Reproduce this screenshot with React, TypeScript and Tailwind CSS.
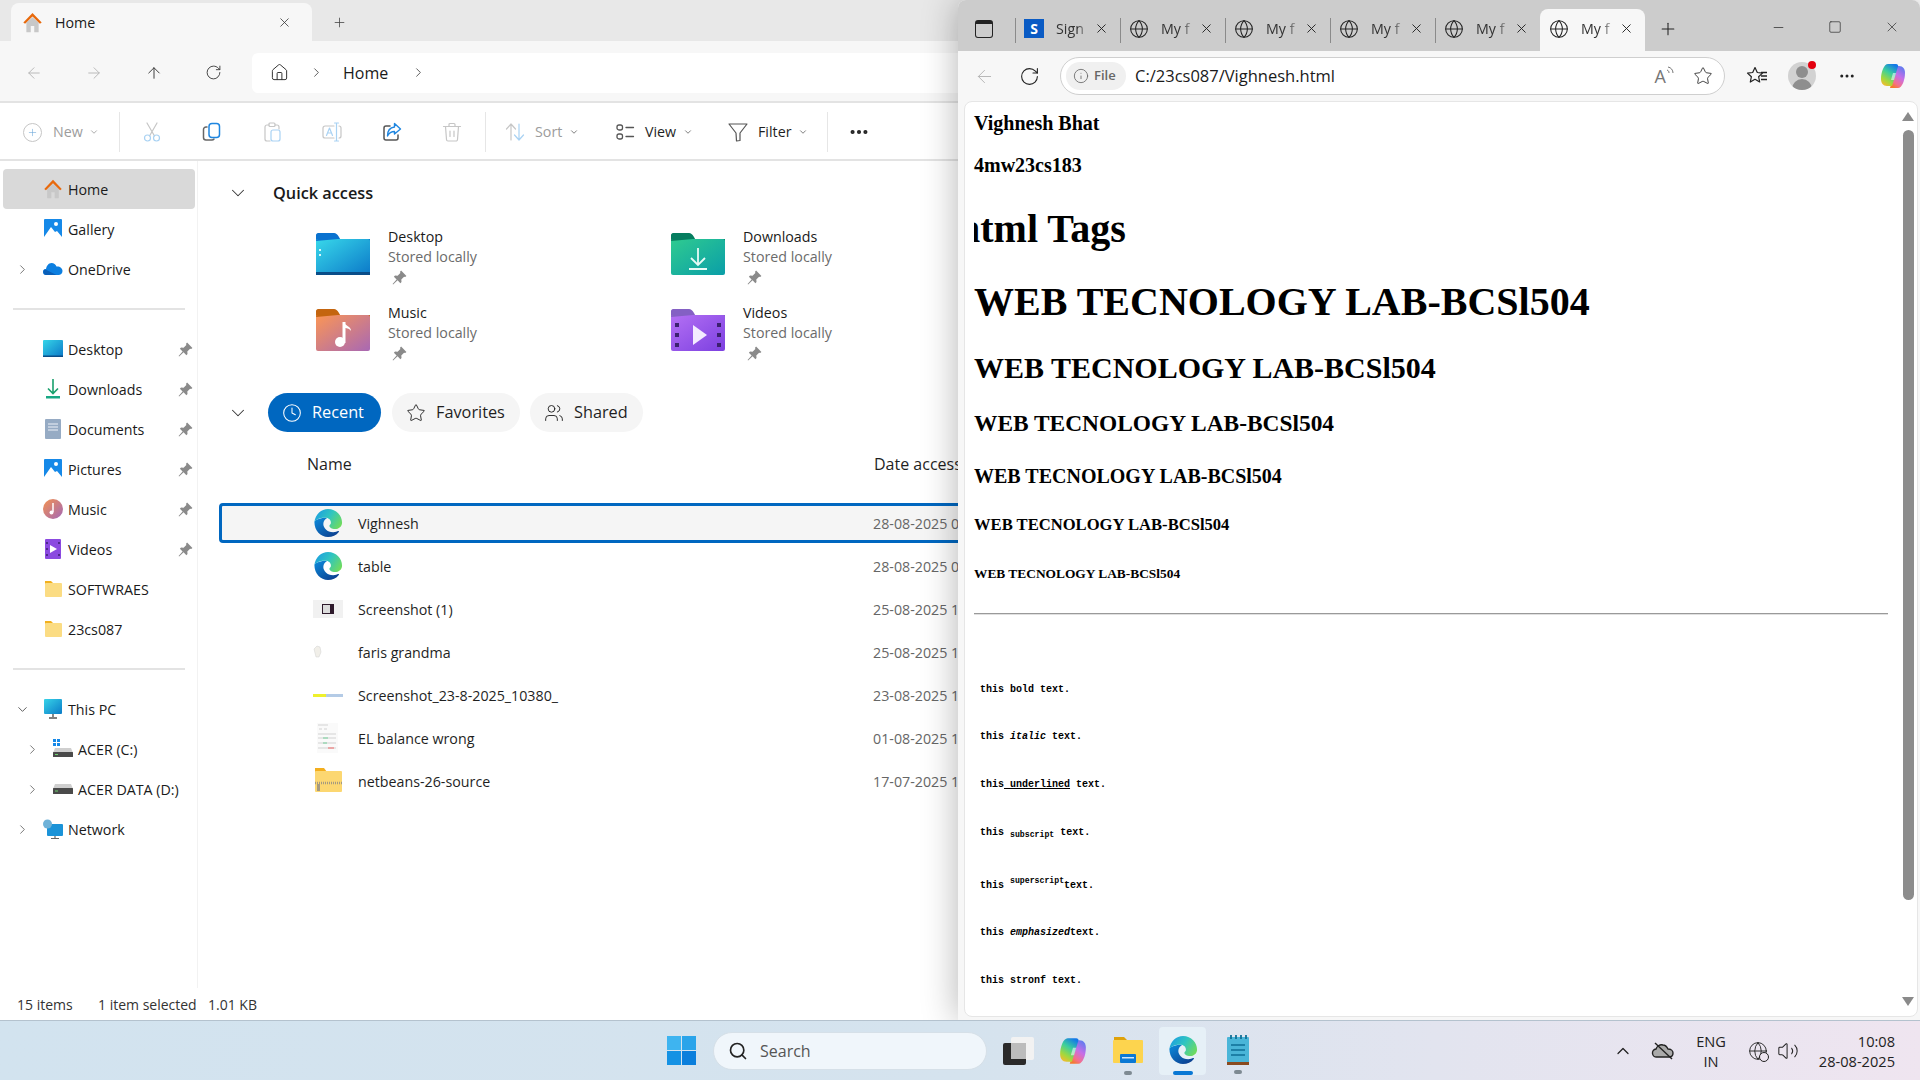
import {
  ArrowLeft,
  ArrowRight,
  ArrowUp,
  ChevronDown,
  ChevronRight,
  ChevronUp,
  Clock,
  Ellipsis,
  Globe,
  Home as HomeIcon,
  Info,
  Minus,
  Plus,
  RotateCw,
  Search,
  Square,
  Star,
  Users,
  Volume2,
  X,
} from "lucide-react";

const UI_FONT = "font-['Open_Sans',sans-serif]";

function PinIcon({ className = "" }: { className?: string }) {
  return (
    <svg viewBox="0 0 16 16" className={`w-[17px] h-[17px] ${className}`}>
      <path d="M9.500 1.500l5 5-1.200 1-1-.3-2.600 2.600.2 2.400-1.100 1.100-2.600-2.600L2 14.500l-.5-.5 3.800-4.200L2.700 7.200l1.100-1.100 2.400.2L8.800 3.700l-.3-1z" fill="#8a8a8a" />
    </svg>
  );
}

function ColorHome({ size = 20 }: { size?: number }) {
  return (
    <svg viewBox="0 0 24 24" width={size} height={size}>
      <path d="M5 12l7-6 7 6v11h-5v-7h-4v7H5z" fill="#c8c8c8" />
      <path d="M12 1L1.500 12l2 1.500L12 5l8.500 8.500 2-1.500z" fill="#e8690c" />
    </svg>
  );
}

function EdgeIcon({ size = 30 }: { size?: number }) {
  return (
    <svg viewBox="0 0 32 32" width={size} height={size}>
      <defs>
        <linearGradient id="edgeTop" x1="0" y1="0.2" x2="1" y2="0.7">
          <stop offset="0" stopColor="#1b9de2" />
          <stop offset="0.5" stopColor="#30c5c0" />
          <stop offset="1" stopColor="#6fdb5e" />
        </linearGradient>
        <linearGradient id="edgeBottom" x1="0.1" y1="0.2" x2="0.8" y2="1">
          <stop offset="0" stopColor="#0c7fd0" />
          <stop offset="1" stopColor="#0c3f8f" />
        </linearGradient>
      </defs>
      <path d="M1.500 15C1.500 24 8 31 16 31c4.500 0 9-2 11.500-5.500.5-.7 0-1.200-.7-.9-1 .5-2.800 1.200-5.300 1.200C15 25.800 11 21 11 17c0-3 2-5.500 4-6.400C8.500 10 2 13 1.500 15z" fill="url(#edgeBottom)" />
      <path d="M1.500 15C2.500 6.500 9 1 16 1c9 0 15 7 15 14.500 0 4.500-3.500 7-7.500 7-3.500 0-6-1.500-6-3.500 0-1 1-1.500 1.500-2.500.5-1.500-.5-5.500-5-6C8 10 3 12.500 1.500 15z" fill="url(#edgeTop)" />
    </svg>
  );
}

function CopilotIcon({ size, idPrefix }: { size: number; idPrefix: string }) {
  return (
    <svg viewBox="0 0 28 28" width={size} height={size}>
      <defs>
        <linearGradient id={`${idPrefix}A`} x1="0.7" y1="0" x2="0.2" y2="1">
          <stop offset="0" stopColor="#1479e8" />
          <stop offset="0.4" stopColor="#3ccf9c" />
          <stop offset="0.75" stopColor="#a4d83c" />
          <stop offset="1" stopColor="#f7b92e" />
        </linearGradient>
        <linearGradient id={`${idPrefix}B`} x1="0.8" y1="0" x2="0.3" y2="1">
          <stop offset="0" stopColor="#5a7cf0" />
          <stop offset="0.45" stopColor="#c66ee8" />
          <stop offset="0.8" stopColor="#f4708c" />
          <stop offset="1" stopColor="#f47a2e" />
        </linearGradient>
      </defs>
      <path d="M19 26h-8L17 4h3c4 0 6 3 6 7 0 7-3 15-7 15z" fill={`url(#${idPrefix}B)`} />
      <path d="M9 2h8c1.500 0 2.500 1 2 2.500L13 24H8c-4 0-6-3-6-7C2 10 5 2 9 2z" fill={`url(#${idPrefix}A)`} />
      <path d="M14 11h3l-2 7h-3z" fill="#ffffff" opacity="0.55" />
    </svg>
  );
}

function BigFolder({ tab, from, to, children }: { tab: string; from: string; to: string; children?: React.ReactNode }) {
  const id = `big-${from.slice(1)}`;
  return (
    <svg viewBox="0 0 54 42" width={54} height={42} className="shrink-0 mt-[6px]">
      <defs>
        <linearGradient id={id} x1="0" y1="0" x2="1" y2="1">
          <stop offset="0" stopColor={from} />
          <stop offset="1" stopColor={to} />
        </linearGradient>
      </defs>
      <path d="M2 0h16c2 0 3 1 5 4l1 2H54v8H0V2C0 1 1 0 2 0z" fill={tab} />
      <rect x="0" y="6" width="54" height="36" rx="2" fill={`url(#${id})`} />
      <path d="M0 8q0-2 2-2h22l-2-1v1" fill={tab} />
      {children}
    </svg>
  );
}

function DesktopSmall() {
  return (
    <svg viewBox="0 0 20 20" width={20} height={20}>
      <defs>
        <linearGradient id="deskS" x1="0" y1="0" x2="1" y2="1">
          <stop offset="0" stopColor="#36d5e8" />
          <stop offset="1" stopColor="#0b78c8" />
        </linearGradient>
      </defs>
      <rect y="1" width="20" height="17" rx="1" fill="url(#deskS)" />
      <rect y="16.500" width="20" height="1.500" fill="#0a4d88" />
    </svg>
  );
}

function SmallIcon({ kind }: { kind: string }) {
  if (kind === "home") return <ColorHome />;
  if (kind === "desktop") return <DesktopSmall />;
  if (kind === "gallery" || kind === "pictures")
    return (
      <svg viewBox="0 0 20 20" width={20} height={20}>
        <rect width="18" height="19" x="1" rx="1" fill="#1689e8" />
        <path d="M1 18l7-10 4 5 2-1 5 6v1H1z" fill="#fff" />
        <circle cx="13" cy="5" r="2" fill="#fff" />
      </svg>
    );
  if (kind === "onedrive")
    return (
      <svg viewBox="0 0 20 20" width={20} height={20}>
        <path d="M3 16a3 3 0 0 1 0-6c.5-3 2.500-6 5.500-6 2.500 0 4 1.500 5 3.500 3-.5 6 1.500 6 4.500 0 2.500-2 4-4 4z" fill="#0d7fe0" />
        <path d="M3 16a3 3 0 0 1-1-5.700L13.500 16z" fill="#0a5fb8" />
      </svg>
    );
  if (kind === "downloads")
    return (
      <svg viewBox="0 0 20 20" width={20} height={20} fill="none">
        <path d="M10 0v14M5 9.500l5 5 5-5" stroke="#1aa06d" strokeWidth="1.600" />
        <rect x="3" y="17" width="14" height="2.500" fill="#18a884" />
      </svg>
    );
  if (kind === "documents")
    return (
      <svg viewBox="0 0 20 20" width={20} height={20}>
        <rect x="2" width="16" height="20" rx="1" fill="#96abc4" />
        <path d="M5 5h10M5 8h10M5 11h10" stroke="#eef2f7" strokeWidth="1.200" />
      </svg>
    );
  if (kind === "music")
    return (
      <svg viewBox="0 0 20 20" width={20} height={20}>
        <defs>
          <linearGradient id="musicS" x1="0" y1="0" x2="1" y2="1">
            <stop offset="0" stopColor="#f4924f" />
            <stop offset="1" stopColor="#a268b8" />
          </linearGradient>
        </defs>
        <circle cx="10" cy="10" r="10" fill="url(#musicS)" />
        <path d="M10 4v9" stroke="#fff" strokeWidth="1.500" />
        <circle cx="8.500" cy="13.500" r="2" fill="#fff" />
      </svg>
    );
  if (kind === "videos")
    return (
      <svg viewBox="0 0 20 20" width={20} height={20}>
        <rect x="2" width="16" height="20" rx="1" fill="#8b4ae0" />
        <path d="M7 6l7 4-7 4z" fill="#fff" />
        <path d="M4 3v2M4 9v2M4 15v2M16 3v2M16 15v2" stroke="#3c2170" strokeWidth="1.500" />
      </svg>
    );
  if (kind === "folder")
    return (
      <svg viewBox="0 0 20 20" width={20} height={20}>
        <path d="M2 2h6l2 2v3H2z" fill="#f2b01e" />
        <rect x="2" y="4" width="17" height="14" rx="1" fill="#fbdc83" />
      </svg>
    );
  if (kind === "pc")
    return (
      <svg viewBox="0 0 20 20" width={20} height={20}>
        <defs>
          <linearGradient id="pcS" x1="0" y1="0" x2="1" y2="1">
            <stop offset="0" stopColor="#37d3e8" />
            <stop offset="1" stopColor="#0b7cc8" />
          </linearGradient>
        </defs>
        <rect x="1" width="18" height="15" rx="1" fill="url(#pcS)" />
        <path d="M10 15v3M6 19h8" stroke="#555" strokeWidth="1.400" />
      </svg>
    );
  if (kind === "driveC")
    return (
      <svg viewBox="0 0 20 20" width={20} height={20}>
        <rect y="0" width="3" height="3" fill="#1689e8" />
        <rect x="4" y="0" width="3" height="3" fill="#1689e8" />
        <rect y="4" width="3" height="3" fill="#1689e8" />
        <rect x="4" y="4" width="3" height="3" fill="#1689e8" />
        <path d="M2 9h16l2 5H0z" fill="#cfcfcf" />
        <rect y="13" width="20" height="5" rx="0.500" fill="#4a4a4a" />
        <rect x="2" y="15" width="3" height="1" fill="#6fd06f" />
      </svg>
    );
  if (kind === "driveD")
    return (
      <svg viewBox="0 0 20 20" width={20} height={20}>
        <path d="M2 5h16l2 5H0z" fill="#cfcfcf" />
        <rect y="9" width="20" height="6" rx="0.500" fill="#4a4a4a" />
        <rect x="2" y="11.500" width="3" height="1" fill="#6fd06f" />
      </svg>
    );
  return (
    <svg viewBox="0 0 20 20" width={20} height={20}>
      <rect x="4" y="5" width="16" height="12" rx="1" fill="#1b93d8" />
      <circle cx="4.500" cy="5" r="4.500" fill="#6fb2d8" />
      <path d="M12 17v2M8 19.500h8" stroke="#666" strokeWidth="1.200" />
    </svg>
  );
}

const NAV_ITEMS = [
  { label: "Home", icon: "home", selected: true },
  { label: "Gallery", icon: "gallery" },
  { label: "OneDrive", icon: "onedrive", chevron: "right" },
  { divider: true },
  { label: "Desktop", icon: "desktop", pinned: true },
  { label: "Downloads", icon: "downloads", pinned: true },
  { label: "Documents", icon: "documents", pinned: true },
  { label: "Pictures", icon: "pictures", pinned: true },
  { label: "Music", icon: "music", pinned: true },
  { label: "Videos", icon: "videos", pinned: true },
  { label: "SOFTWRAES", icon: "folder" },
  { label: "23cs087", icon: "folder" },
  { divider: true },
  { label: "This PC", icon: "pc", chevron: "down" },
  { label: "ACER (C:)", icon: "driveC", chevron: "right", indent: true },
  { label: "ACER DATA (D:)", icon: "driveD", chevron: "right", indent: true },
  { label: "Network", icon: "network", chevron: "right" },
];

function Sidebar() {
  return (
    <nav className="w-[198px] shrink-0 border-r border-[#f2f2f2] pt-2">
      {NAV_ITEMS.map((item, i) =>
        item.divider ? (
          <div key={i} className="h-10 flex items-center pl-[13px]">
            <div className="w-[172px] h-[2px] bg-[#e3e3e3]" />
          </div>
        ) : (
          <div
            key={i}
            className={`ml-[3px] w-[192px] h-10 rounded flex items-center text-[14.25px] text-[#1a1a1a] ${
              item.selected ? "bg-[#d9d9d9]" : ""
            } ${item.indent ? "pl-[22px]" : "pl-[12px]"}`}
          >
            <span className="w-[14px] shrink-0 text-[#555]">
              {item.chevron === "right" && <ChevronRight size={15} strokeWidth={1.25} />}
              {item.chevron === "down" && <ChevronDown size={15} strokeWidth={1.5} />}
            </span>
            <span className="ml-[14px] w-[20px] shrink-0">
              <SmallIcon kind={item.icon as string} />
            </span>
            <span className="ml-[5px] pt-[2px] whitespace-nowrap">{item.label}</span>
            {item.pinned && <PinIcon className="ml-auto mr-[1px]" />}
          </div>
        ),
      )}
    </nav>
  );
}

const QUICK_TILES = [
  { name: "Desktop", tab: "#0a72cf", from: "#38d8ea", to: "#0b78c8", glyph: "desktop" },
  { name: "Downloads", tab: "#067d5f", from: "#2fcb90", to: "#0a9ea8", glyph: "download" },
  { name: "Music", tab: "#c4650f", from: "#fb9655", to: "#a868b4", glyph: "music" },
  { name: "Videos", tab: "#8460c4", from: "#b470f4", to: "#7c40e0", glyph: "video" },
];

function TileGlyph({ glyph }: { glyph: string }) {
  if (glyph === "desktop")
    return (
      <>
        <path d="M4 16v2M4 21v2" stroke="#d8f6fa" strokeWidth="2" />
        <rect y="39" width="54" height="3" fill="#0a4d88" />
      </>
    );
  if (glyph === "download")
    return <path d="M27 15v17M20 25l7 7 7-7M18 36h18" stroke="#e6fbf6" strokeWidth="1.800" fill="none" />;
  if (glyph === "music")
    return (
      <>
        <path d="M28 13v21" stroke="#fff" strokeWidth="3" />
        <path d="M28 13c1 4 7 4 7 9-2-3-5-3-7-3z" fill="#fff" />
        <circle cx="24" cy="33" r="5" fill="#fff" />
      </>
    );
  return (
    <>
      <path d="M22 16l14 10-14 10z" fill="#f4ecff" />
      <path d="M6 14v4M6 24v4M6 34v4M48 14v4M48 24v4M48 34v4" stroke="#3c2170" strokeWidth="4" />
    </>
  );
}

const RECENT_FILES = [
  { name: "Vighnesh", date: "28-08-2025 0", thumb: "edge", selected: true },
  { name: "table", date: "28-08-2025 0", thumb: "edge" },
  { name: "Screenshot (1)", date: "25-08-2025 1", thumb: "shot" },
  { name: "faris grandma", date: "25-08-2025 1", thumb: "hand" },
  { name: "Screenshot_23-8-2025_10380_", date: "23-08-2025 1", thumb: "strip" },
  { name: "EL balance wrong", date: "01-08-2025 1", thumb: "sheet" },
  { name: "netbeans-26-source", date: "17-07-2025 1", thumb: "zip" },
];

function Thumb({ kind }: { kind: string }) {
  if (kind === "edge") return <EdgeIcon />;
  if (kind === "shot")
    return (
      <svg viewBox="0 0 30 30" width={30} height={30}>
        <rect y="6" width="30" height="18" fill="#f1f1f1" />
        <rect x="9" y="10" width="12" height="10" fill="#2e1a2c" />
        <rect x="10" y="11" width="7" height="8" fill="#dcdcdc" />
      </svg>
    );
  if (kind === "hand")
    return (
      <svg viewBox="0 0 30 30" width={30} height={30}>
        <path d="M1 12l3-3 3 1 1 5-2 5H3z" fill="#f1efe9" stroke="#d0d0d0" strokeWidth="0.500" />
      </svg>
    );
  if (kind === "strip")
    return (
      <svg viewBox="0 0 30 30" width={30} height={30}>
        <rect y="14" width="13" height="3" fill="#eef02c" />
        <rect x="13" y="14" width="17" height="3" fill="#b4cbe6" />
      </svg>
    );
  if (kind === "sheet")
    return (
      <svg viewBox="0 0 30 30" width={30} height={30}>
        <rect x="4" width="21" height="30" fill="#fafafa" />
        <path d="M5 2h10M6 6h3M11 6h3M5 11h18M5 15h18M5 20h18M5 25h18" stroke="#c8c8c8" strokeWidth="0.800" />
        <path d="M10 15h5M10 20h4" stroke="#74d09a" strokeWidth="1.200" />
        <path d="M15 25h6" stroke="#ee7e7e" strokeWidth="1.200" />
      </svg>
    );
  return (
    <svg viewBox="0 0 30 30" width={30} height={30}>
      <path d="M2 2h9l3 4H2z" fill="#f3ae1e" />
      <rect x="2" y="5" width="27" height="21" rx="1" fill="#fcd771" />
      <path d="M2 17h27" stroke="#a59a80" strokeWidth="2.500" strokeDasharray="1 1" />
      <rect x="4" y="18" width="3" height="7" fill="#a59a80" />
    </svg>
  );
}

// command bar icons, all on the same 20px box
const BLUE_DIM = "#a9d2f3";
const GRAY_DIM = "#c6c6c6";

function CmdIcon({ kind }: { kind: string }) {
  return (
    <svg viewBox="0 0 20 20" width={20} height={20} fill="none" strokeWidth="1.200" strokeLinecap="round" strokeLinejoin="round">
      {kind === "cut" && (
        <>
          <path d="M5 1l7.500 13M15 1L7.500 14" stroke={GRAY_DIM} />
          <circle cx="5.500" cy="16" r="3" stroke={BLUE_DIM} />
          <circle cx="14.500" cy="16" r="3" stroke={BLUE_DIM} />
        </>
      )}
      {kind === "copy" && (
        <>
          <path d="M5 5H4a2.500 2.500 0 0 0-2.500 2.500v8A2.500 2.500 0 0 0 4 18h6a2.500 2.500 0 0 0 2-1" stroke="#666" strokeWidth="1.500" />
          <rect x="7" y="1.500" width="10.500" height="14" rx="3" stroke="#1f86e0" strokeWidth="1.500" />
        </>
      )}
      {kind === "paste" && (
        <>
          <path d="M7 3H5a2 2 0 0 0-2 2v12a2 2 0 0 0 2 2h3M13 3h2a2 2 0 0 1 2 2v2" stroke={GRAY_DIM} />
          <rect x="7" y="1" width="6" height="3.500" rx="1" stroke={GRAY_DIM} />
          <rect x="9" y="8" width="9" height="11" rx="2" stroke={BLUE_DIM} />
        </>
      )}
      {kind === "rename" && (
        <>
          <path d="M12 4H3a2 2 0 0 0-2 2v8a2 2 0 0 0 2 2h9M17 4a2 2 0 0 1 2 2v8a2 2 0 0 1-2 2" stroke={GRAY_DIM} />
          <path d="M14.500 1v18M12.500 1h4M12.500 19h4" stroke={BLUE_DIM} />
          <path d="M4.500 13.500l3-7.500 3 7.500M5.500 11h4" stroke={BLUE_DIM} />
        </>
      )}
      {kind === "share" && (
        <>
          <path d="M8 4H4a2 2 0 0 0-2 2v10a2 2 0 0 0 2 2h10a2 2 0 0 0 2-2v-3" stroke="#555" strokeWidth="1.500" />
          <path d="M12.500 1.500L18.500 7l-6 5V9.500C9 9.500 7 11 5.500 14c0-5 2.500-8.500 7-9z" stroke="#1f86e0" strokeWidth="1.400" />
        </>
      )}
      {kind === "delete" && (
        <path d="M1.500 4.500h17M7 4.500V2.500a1 1 0 0 1 1-1h4a1 1 0 0 1 1 1v2M3.500 4.500l1 13a1.500 1.500 0 0 0 1.500 1.500h8a1.500 1.500 0 0 0 1.500-1.500l1-13M8 9v5.500M12 9v5.500" stroke={GRAY_DIM} />
      )}
      {kind === "sort" && (
        <>
          <path d="M6 18V2M1.500 7L6 2l4.500 5" stroke={GRAY_DIM} />
          <path d="M14 2v16M9.500 13l4.500 5 4.500-5" stroke={BLUE_DIM} />
        </>
      )}
      {kind === "view" && (
        <>
          <rect x="2" y="3" width="5.500" height="5" rx="2" stroke="#555" strokeWidth="1.300" />
          <rect x="2" y="12" width="5.500" height="5" rx="2" stroke="#555" strokeWidth="1.300" />
          <path d="M11 5.500h7.500M11 14.500h7.500" stroke="#555" strokeWidth="1.300" />
        </>
      )}
      {kind === "filter" && <path d="M1 2h18l-7 9v7.500L8.500 19l-.5-8z" stroke="#555" strokeWidth="1.200" />}
    </svg>
  );
}

function ToolMenu({ icon, label, width, pl = 0, muted = false }: { icon: string; label: string; width: number; pl?: number; muted?: boolean }) {
  return (
    <div className="flex items-center h-full" style={{ width, paddingLeft: pl }}>
      <span className="w-[20px] flex justify-center"><CmdIcon kind={icon} /></span>
      <span className={`ml-[10px] text-[14.25px] ${muted ? "text-[#9c9c9c]" : "text-[#1f1f1f]"}`}>{label}</span>
      <ChevronDown size={10} className="ml-[7px] text-[#666]" />
    </div>
  );
}

function Explorer() {
  return (
    <div className={`absolute left-0 top-0 w-[1000px] h-[1020px] bg-white flex flex-col ${UI_FONT}`}>
      <div className="h-[41px] bg-[#e8e8e8] flex items-end pl-[11px]">
        <div className="w-[301px] h-[38px] bg-[#f7f7f7] rounded-t-lg flex items-center pl-[11px]">
          <ColorHome size={21} />
          <span className="ml-[12px] pt-[1px] text-[14.25px] text-[#1a1a1a]">Home</span>
          <X size={15} strokeWidth={1.25} className="ml-auto mr-[20px] text-[#333]" />
        </div>
        <div className="h-[38px] flex items-center ml-[20px]">
          <Plus size={15} strokeWidth={1.25} className="text-[#444]" />
        </div>
      </div>

      <div className="h-[62px] pt-[3px] bg-[#f7f7f7] border-b-2 border-[#e3e3e3] flex items-center">
        <div className="w-[252px] flex items-center pl-[25px] gap-[42px] text-[#333]">
          <ArrowLeft size={18} strokeWidth={1.25} className="text-[#b5b5b5]" />
          <ArrowRight size={18} strokeWidth={1.25} className="text-[#b5b5b5]" />
          <ArrowUp size={18} strokeWidth={1.25} />
          <RotateCw size={17} strokeWidth={1.25} />
        </div>
        <div className="flex-1 h-10 bg-white rounded-l-md flex items-center pl-[18px] text-[#333]">
          <HomeIcon size={19} strokeWidth={1.25} />
          <ChevronRight size={15} strokeWidth={1.25} className="ml-[20px]" />
          <span className="ml-[19px] text-[16px] text-[#1a1a1a]">Home</span>
          <ChevronRight size={15} strokeWidth={1.25} className="ml-[23px]" />
        </div>
      </div>

      <div className="h-[58px] pt-[2px] border-b-2 border-[#e3e3e3] flex items-center">
        <div className="w-[119px] pl-[23px] flex items-center">
          <span className="w-[19px] h-[19px] rounded-full border border-[#c6c6c6] flex items-center justify-center">
            <Plus size={11} strokeWidth={1.25} className="text-[#6aa6d8]" />
          </span>
          <span className="ml-[11px] text-[14.25px] text-[#9c9c9c]">New</span>
          <ChevronDown size={10} className="ml-[6px] text-[#9c9c9c]" />
        </div>
        <div className="w-px h-[40px] bg-[#e6e6e6]" />
        <div className="ml-[2px] mr-[3px] flex items-center">
          {["cut", "copy", "paste", "rename", "share", "delete"].map((kind) => (
            <span key={kind} className="w-[60px] flex justify-center"><CmdIcon kind={kind} /></span>
          ))}
        </div>
        <div className="w-px h-[40px] bg-[#e6e6e6]" />
        <ToolMenu icon="sort" label="Sort" width={129} pl={19} muted />
        <ToolMenu icon="view" label="View" width={113} />
        <ToolMenu icon="filter" label="Filter" width={99} />
        <div className="w-px h-[40px] bg-[#e6e6e6]" />
        <Ellipsis size={22} strokeWidth={2.5} className="ml-[20px] text-[#222]" />
      </div>

      <div className="flex-1 flex min-h-0">
        <Sidebar />
        <main className="flex-1 min-w-0">
          <div className="mt-3 h-10 flex items-center pl-[29px]">
            <ChevronDown size={22} strokeWidth={1.1} className="text-[#333]" />
            <span className="ml-[24px] text-[16.3px] font-semibold text-[#1a1a1a]">Quick access</span>
          </div>
          <div className="mt-[14px] pl-[118px] grid grid-cols-[355px_355px] gap-y-4">
            {QUICK_TILES.map((tile) => (
              <div key={tile.name} className="flex h-[60px]">
                <BigFolder tab={tile.tab} from={tile.from} to={tile.to}>
                  <TileGlyph glyph={tile.glyph} />
                </BigFolder>
                <div className="ml-[18px] text-[14.25px] leading-5">
                  <div className="text-[#1a1a1a]">{tile.name}</div>
                  <div className="text-[#6b6b6b]">Stored locally</div>
                  <div className="h-5 flex items-center pl-[3px]"><PinIcon /></div>
                </div>
              </div>
            ))}
          </div>
          <div className="mt-[30px] h-[39px] flex items-center pl-[29px]">
            <ChevronDown size={22} strokeWidth={1.1} className="text-[#333]" />
            <div className="ml-[19px] w-[113px] h-[39px] rounded-[20px] bg-[#0067c0] text-white text-[16.3px] flex items-center pl-[14px] gap-[10px]">
              <Clock size={20} strokeWidth={1.25} />
              Recent
            </div>
            <div className="ml-[11px] w-[128px] h-[39px] rounded-[20px] bg-[#f5f5f5] text-[#1f1f1f] text-[16.3px] flex items-center pl-[14px] gap-[10px]">
              <Star size={20} strokeWidth={1.1} />
              Favorites
            </div>
            <div className="ml-[10px] w-[113px] h-[39px] rounded-[20px] bg-[#f5f5f5] text-[#1f1f1f] text-[16.3px] flex items-center pl-[14px] gap-[10px]">
              <Users size={20} strokeWidth={1.1} />
              Shared
            </div>
          </div>
          <div className="mt-3 h-10 flex items-center pl-[109px] text-[16px] text-[#1f1f1f]">
            <span className="w-[567px]">Name</span>
            <span className="whitespace-nowrap">Date accessed</span>
          </div>
          <div className="mt-[19px] ml-[21px] flex flex-col gap-[3px]">
            {RECENT_FILES.map((file) => (
              <div
                key={file.name}
                className={`h-10 flex items-center pl-[91px] text-[14.25px] text-[#1f1f1f] border-[3px] rounded-l ${
                  file.selected ? "border-[#0067c0] bg-[#f5f5f5]" : "border-transparent"
                }`}
              >
                <span className="w-[30px] h-[30px] shrink-0"><Thumb kind={file.thumb} /></span>
                <span className="ml-[15px] w-[515px] pt-[2px] whitespace-nowrap">{file.name}</span>
                <span className="pt-[2px] text-[#666] whitespace-nowrap">{file.date}</span>
              </div>
            ))}
          </div>
        </main>
      </div>

      <div className="h-8 flex items-center pl-[17px] text-[14px] text-[#333]">
        <span className="w-[81px]">15 items</span>
        <span className="w-[110px]">1 item selected</span>
        <span>1.01 KB</span>
      </div>
    </div>
  );
}

function BrowserTab({ label, favicon, active }: { label: string; favicon?: boolean; active?: boolean }) {
  return (
    <div className={`w-[105px] h-full flex items-center relative pb-[3px] ${active ? "bg-[#f7f7f7] rounded-t-lg" : ""}`}>
      {!active && <div className="absolute left-0 top-[9px] h-[25px] w-px bg-[#8a8a8a]" />}
      <div className="ml-[9px] w-[20px] flex justify-center">
        {favicon ? (
          <span className="w-[20px] h-[19px] bg-[#0a5bc4] text-white text-[14px] font-bold leading-[19px] text-center">S</span>
        ) : (
          <Globe size={20} strokeWidth={1.25} className="text-[#222]" />
        )}
      </div>
      <span className="ml-[12px] w-[33px] overflow-hidden whitespace-nowrap text-[14.25px] text-[#333] [mask-image:linear-gradient(to_right,black_65%,transparent)]">{label}</span>
      <X size={15} strokeWidth={1.5} className="ml-[5px] text-[#222]" />
    </div>
  );
}

const PAGE_HEADINGS = [
  { text: "WEB TECNOLOGY LAB-BCSl504", cls: "mt-[27px] text-[40px] leading-[46px]" },
  { text: "WEB TECNOLOGY LAB-BCSl504", cls: "mt-[24.5px] text-[30px] leading-[35px]" },
  { text: "WEB TECNOLOGY LAB-BCSl504", cls: "mt-[25px] text-[23.4px] leading-[27px]" },
  { text: "WEB TECNOLOGY LAB-BCSl504", cls: "mt-[28px] text-[20px] leading-[23px]" },
  { text: "WEB TECNOLOGY LAB-BCSl504", cls: "mt-[27px] text-[16.6px] leading-[19px]" },
  { text: "WEB TECNOLOGY LAB-BCSl504", cls: "mt-[32px] text-[13.4px] leading-[15px]" },
];

function PageContent() {
  return (
    <div className="flex-1 min-w-0 pl-[9px] pr-[11px] font-['Liberation_Serif',serif] font-bold text-black overflow-hidden">
      <div className="mt-[9.5px] text-[20px] leading-[23px]">Vighnesh Bhat</div>
      <div className="mt-[19px] text-[20px] leading-[23px]">4mw23cs183</div>
      <div className="mt-[29.5px] text-[40px] leading-[46px] overflow-hidden whitespace-nowrap">
        <div className="-ml-[16px]">html Tags</div>
      </div>
      {PAGE_HEADINGS.map((h) => (
        <div key={h.cls} className={`${h.cls} whitespace-nowrap`}>{h.text}</div>
      ))}
      <div className="mt-[32px] h-[2px] bg-[#9a9a9a] border-b border-[#e0e0e0]" />
      <div className="pl-[6px] font-['Liberation_Mono',monospace] font-bold text-[10px] leading-[12px]">
        <p className="mt-[69px]">this bold text.</p>
        <p className="mt-[35px]">this <i>italic</i> text.</p>
        <p className="mt-[36px]">this<u> underlined</u> text.</p>
        <p className="mt-[36px]">this <sub className="text-[8.2px]">subscript</sub> text.</p>
        <p className="mt-[41px]">this <sup className="text-[8.2px]">superscript</sup>text.</p>
        <p className="mt-[35px]">this <em>emphasized</em>text.</p>
        <p className="mt-[36px]">this stronf text.</p>
      </div>
    </div>
  );
}

function Browser() {
  return (
    <div className={`absolute left-[958px] top-0 w-[962px] h-[1020px] bg-[#f7f7f7] rounded-t-lg flex flex-col shadow-[0_0_36px_rgba(0,0,0,0.3)] ${UI_FONT}`}>
      <div className="h-[51px] bg-[#cccccc] rounded-t-lg flex items-stretch shrink-0 pt-[9px]">
        <div className="w-[57px] flex items-center justify-center pr-[6px] pb-[3px]">
          <span className="w-[18px] h-[18px] border-[1.500px] border-[#222] border-t-[4px] rounded-[3px]" />
        </div>
        <BrowserTab label="Sign" favicon />
        <BrowserTab label="My f" />
        <BrowserTab label="My f" />
        <BrowserTab label="My f" />
        <BrowserTab label="My f" />
        <BrowserTab label="My f" active />
        <div className="flex items-center pl-[13px] pb-[3px]"><Plus size={20} strokeWidth={1.25} className="text-[#222]" /></div>
        <div className="flex items-center ml-auto pr-[20px] gap-[42px] text-[#333] -mt-[6px]">
          <Minus size={15} strokeWidth={1.25} />
          <Square size={14} strokeWidth={1.25} />
          <X size={16} strokeWidth={1.1} />
        </div>
      </div>

      <div className="h-[50px] shrink-0 flex items-center">
        <ArrowLeft size={21} strokeWidth={1.1} className="ml-[16px] text-[#b5b5b5]" />
        <RotateCw size={21} strokeWidth={1.25} className="ml-[24px] text-[#222]" />
        <div className="ml-[20px] w-[665px] h-[38px] bg-white border border-[#cfcfcf] rounded-full flex items-center pl-[5px] pr-[11px]">
          <div className="w-[60px] h-[28px] rounded-full bg-[#f0f0f0] flex items-center pl-[7px] text-[#666]">
            <Info size={16} strokeWidth={1.25} />
            <span className="ml-[5px] text-[13px] font-semibold">File</span>
          </div>
          <span className="ml-[9px] text-[16.5px] text-[#1a1a1a]">C:/23cs087/Vighnesh.html</span>
          <span className="ml-auto text-[18px] text-[#777] leading-none">A</span>
          <svg viewBox="0 0 10 12" width={10} height={12} fill="none" stroke="#777" className="-mt-[10px]">
            <path d="M1 5c1.500.5 2 1.500 2 3M2 2c3 .5 5 3 5 6" />
          </svg>
          <Star size={20} strokeWidth={1.1} className="ml-[17px] text-[#333]" />
        </div>
        <svg viewBox="0 0 22 20" width={22} height={20} fill="none" stroke="#222" strokeWidth="1.200" strokeLinejoin="round" className="ml-[21px]">
          <path d="M9 1.500l2.300 5 5.200.6-3.900 3.600 1.100 5.300L9 13.300 4.300 16l1.100-5.300L1.500 7.100l5.200-.6z" />
          <path d="M15 6.500h6M15 10h6M15 13.500h6" strokeWidth="1.400" />
        </svg>
        <div className="ml-[20px] w-[28px] h-[28px] rounded-full bg-[#d2d2d2] flex flex-col items-center justify-end relative">
          <div className="absolute inset-0 rounded-full overflow-hidden flex flex-col items-center pt-[4px]">
            <span className="w-[12px] h-[12px] rounded-full bg-[#8e8e8e]" />
            <span className="w-[20px] h-[12px] rounded-t-full bg-[#8e8e8e] mt-[1px]" />
          </div>
          <span className="absolute -top-[1px] right-0 w-[8px] h-[8px] rounded-full bg-[#e3000f]" />
        </div>
        <Ellipsis size={18} strokeWidth={2} className="ml-[22px] text-[#222]" />
        <span className="ml-[23px]"><CopilotIcon size={28} idPrefix="copHead" /></span>
      </div>

      <div className="flex-1 min-h-0 ml-[6px] mr-[2px] mb-[3px] bg-white border border-[#e6e6e6] rounded-lg flex overflow-hidden">
        <PageContent />
        <div className="w-[18px] shrink-0 flex flex-col items-center pt-[10px] pb-[10px]">
          <span className="w-0 h-0 border-x-[6px] border-x-transparent border-b-[9px] border-b-[#8a8a8a]" />
          <div className="mt-[9px] w-[11px] h-[770px] rounded-full bg-[#8c8c8c]" />
          <span className="mt-auto w-0 h-0 border-x-[6px] border-x-transparent border-t-[9px] border-t-[#8a8a8a]" />
        </div>
      </div>
    </div>
  );
}

function Taskbar() {
  return (
    <footer className={`h-[60px] shrink-0 border-t border-[#b4c2ce] bg-gradient-to-r from-[#d2e3ef] via-[#d5e3ee] to-[#efe5f0] flex items-center relative ${UI_FONT}`}>
      <div className="ml-[667px] w-[29px] h-[29px] grid grid-cols-2 gap-[1.500px]">
        <span className="bg-[#3eb4f0]" />
        <span className="bg-[#2aa4ea]" />
        <span className="bg-[#1592e4]" />
        <span className="bg-[#0b7fdc]" />
      </div>
      <div className="ml-[17px] w-[274px] h-[38px] rounded-full bg-[#f0f6fb] border border-[#d6e0e8] flex items-center pl-[14px]">
        <Search size={20} strokeWidth={2} className="text-[#222]" />
        <span className="ml-[12px] text-[16px] text-[#555]">Search</span>
      </div>
      <div className="ml-[16px] w-[31px] h-[28px] relative">
        <span className="absolute left-[8px] top-0 w-[23px] h-[23px] rounded-[2px] bg-[#f2f2f2]" />
        <span className="absolute left-0 top-[6px] w-[23px] h-[22px] rounded-[2px] bg-[#2a2a2a]" />
        <span className="absolute left-[8px] top-[6px] w-[15px] h-[16px] bg-[#bcbcbc]" />
      </div>
      <span className="ml-[24px]"><CopilotIcon size={30} idPrefix="copBar" /></span>
      <div className="ml-[25px] w-[30px] h-[32px] flex flex-col relative">
        <svg viewBox="0 0 30 28" width={30} height={28}>
          <path d="M1 2h10l3 3H1z" fill="#dfa20a" />
          <rect x="0" y="5" width="30" height="23" rx="1" fill="#fdd44e" />
          <rect x="7" y="19" width="16" height="9" rx="1" fill="#0a78d4" />
          <rect x="9" y="22" width="12" height="1.500" fill="#cfe6f8" />
        </svg>
        <span className="absolute left-[11px] top-[36px] w-[8px] h-[4px] rounded-full bg-[#7e8a92]" />
      </div>
      <div className="ml-[16px] w-[47px] h-[48px] rounded bg-[#e6f0f7] flex items-start justify-center pt-[8px] relative">
        <EdgeIcon size={30} />
        <span className="absolute left-[14px] top-[44px] w-[20px] h-[4px] rounded-full bg-[#0a78d4]" />
      </div>
      <div className="ml-[21px] w-[22px] h-[32px] relative">
        <svg viewBox="0 0 22 31" width={22} height={31}>
          <rect y="2" width="22" height="27" rx="1" fill="#4ab5d8" />
          <rect y="27" width="22" height="3" fill="#8a4b20" />
          <path d="M4 10h14M4 15h14M4 20h14" stroke="#0f6f96" strokeWidth="1.500" />
          <path d="M4 0v4M9 0v4M14 0v4M19 0v4" stroke="#0f6f96" strokeWidth="1.800" />
        </svg>
        <span className="absolute left-[7px] top-[35px] w-[8px] h-[4px] rounded-full bg-[#7e8a92]" />
      </div>
      <div className="ml-auto flex items-center text-[#222] pr-[25px]">
        <ChevronUp size={20} strokeWidth={1.5} />
        <svg viewBox="0 0 24 20" width={24} height={20} className="ml-[18px]">
          <path d="M6 16a4 4 0 0 1-1-8c1-3 4-5 7-4 2 0 4 2 5 4 3 0 5 2 5 4 0 3-2 4-4 4z" fill="#aaa" stroke="#222" strokeWidth="1.400" />
          <path d="M4 2l17 16" stroke="#222" strokeWidth="1.400" />
        </svg>
        <div className="ml-[11px] w-[50px] text-[14.6px] leading-[20px] text-center">
          <div>ENG</div>
          <div>IN</div>
        </div>
        <div className="ml-[12px] relative">
          <Globe size={20} strokeWidth={1.1} />
          <span className="absolute -right-[1px] -bottom-[1px] w-[10px] h-[10px] rounded-full bg-[#ece4ef] border border-[#222]" />
        </div>
        <Volume2 size={22} strokeWidth={1.1} className="ml-[9px]" />
        <div className="ml-[18px] w-[78px] text-[14.6px] leading-[20px] text-right whitespace-nowrap">
          <div>10:08</div>
          <div>28-08-2025</div>
        </div>
      </div>
    </footer>
  );
}

export default function App() {
  return (
    <div className="w-[1920px] h-[1080px] overflow-hidden flex flex-col bg-white">
      <div className="relative flex-1 overflow-hidden">
        <Explorer />
        <Browser />
      </div>
      <Taskbar />
    </div>
  );
}
